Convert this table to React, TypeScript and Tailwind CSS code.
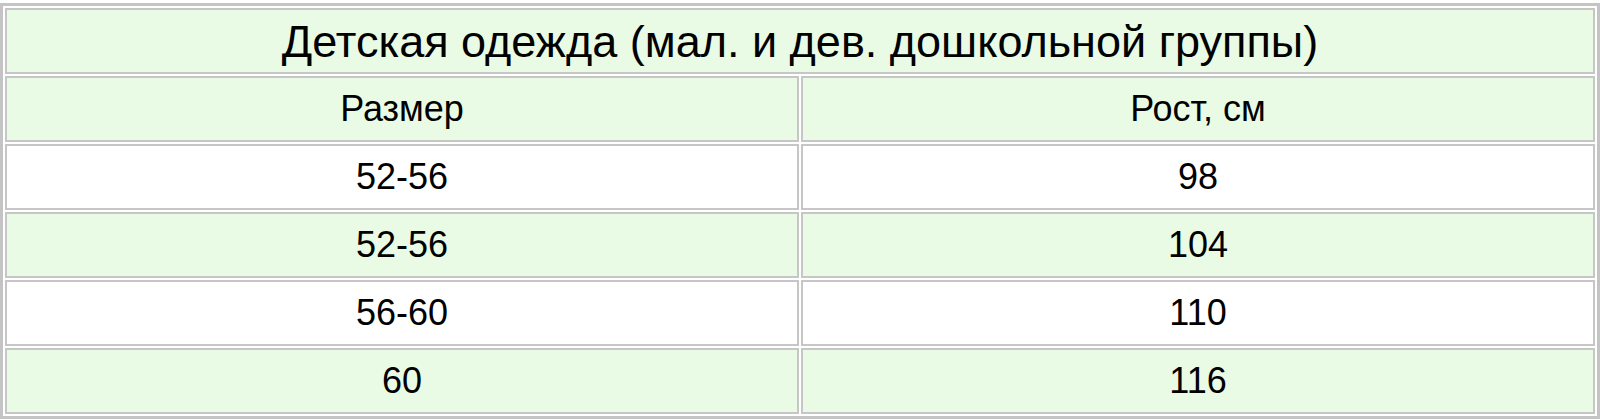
const rows = [
  { size: "52-56", height: "98", tint: false },
  { size: "52-56", height: "104", tint: true },
  { size: "56-60", height: "110", tint: false },
  { size: "60", height: "116", tint: true },
];

export default function App() {
  return (
    <div className="min-h-screen bg-white pt-[3px] font-['Liberation_Sans',Arial,sans-serif] text-black">
      <table className="w-[1600px] table-fixed border-separate border-spacing-[2px] border-[3px] border-[#c4c4c4]">
        <tbody>
          <tr>
            <td
              colSpan={2}
              className="h-[66px] border-2 border-[#c6c6c6] bg-[#e9fbe5] p-0 text-center align-middle text-[45px] leading-none"
            >
              Детская одежда (мал. и дев. дошкольной группы)
            </td>
          </tr>
          <tr>
            <td className="h-[66px] w-[794px] border-2 border-[#c6c6c6] bg-[#e9fbe5] p-0 text-center align-middle text-[36px] leading-none">
              Размер
            </td>
            <td className="h-[66px] border-2 border-[#c6c6c6] bg-[#e9fbe5] p-0 text-center align-middle text-[36px] leading-none">
              Рост, см
            </td>
          </tr>
          {rows.map((row, i) => (
            <tr key={i}>
              <td
                className={`h-[66px] border-2 border-[#c6c6c6] p-0 text-center align-middle text-[36px] leading-none ${
                  row.tint ? "bg-[#e9fbe5]" : "bg-white"
                }`}
              >
                {row.size}
              </td>
              <td
                className={`h-[66px] border-2 border-[#c6c6c6] p-0 text-center align-middle text-[36px] leading-none ${
                  row.tint ? "bg-[#e9fbe5]" : "bg-white"
                }`}
              >
                {row.height}
              </td>
            </tr>
          ))}
        </tbody>
      </table>
    </div>
  );
}
